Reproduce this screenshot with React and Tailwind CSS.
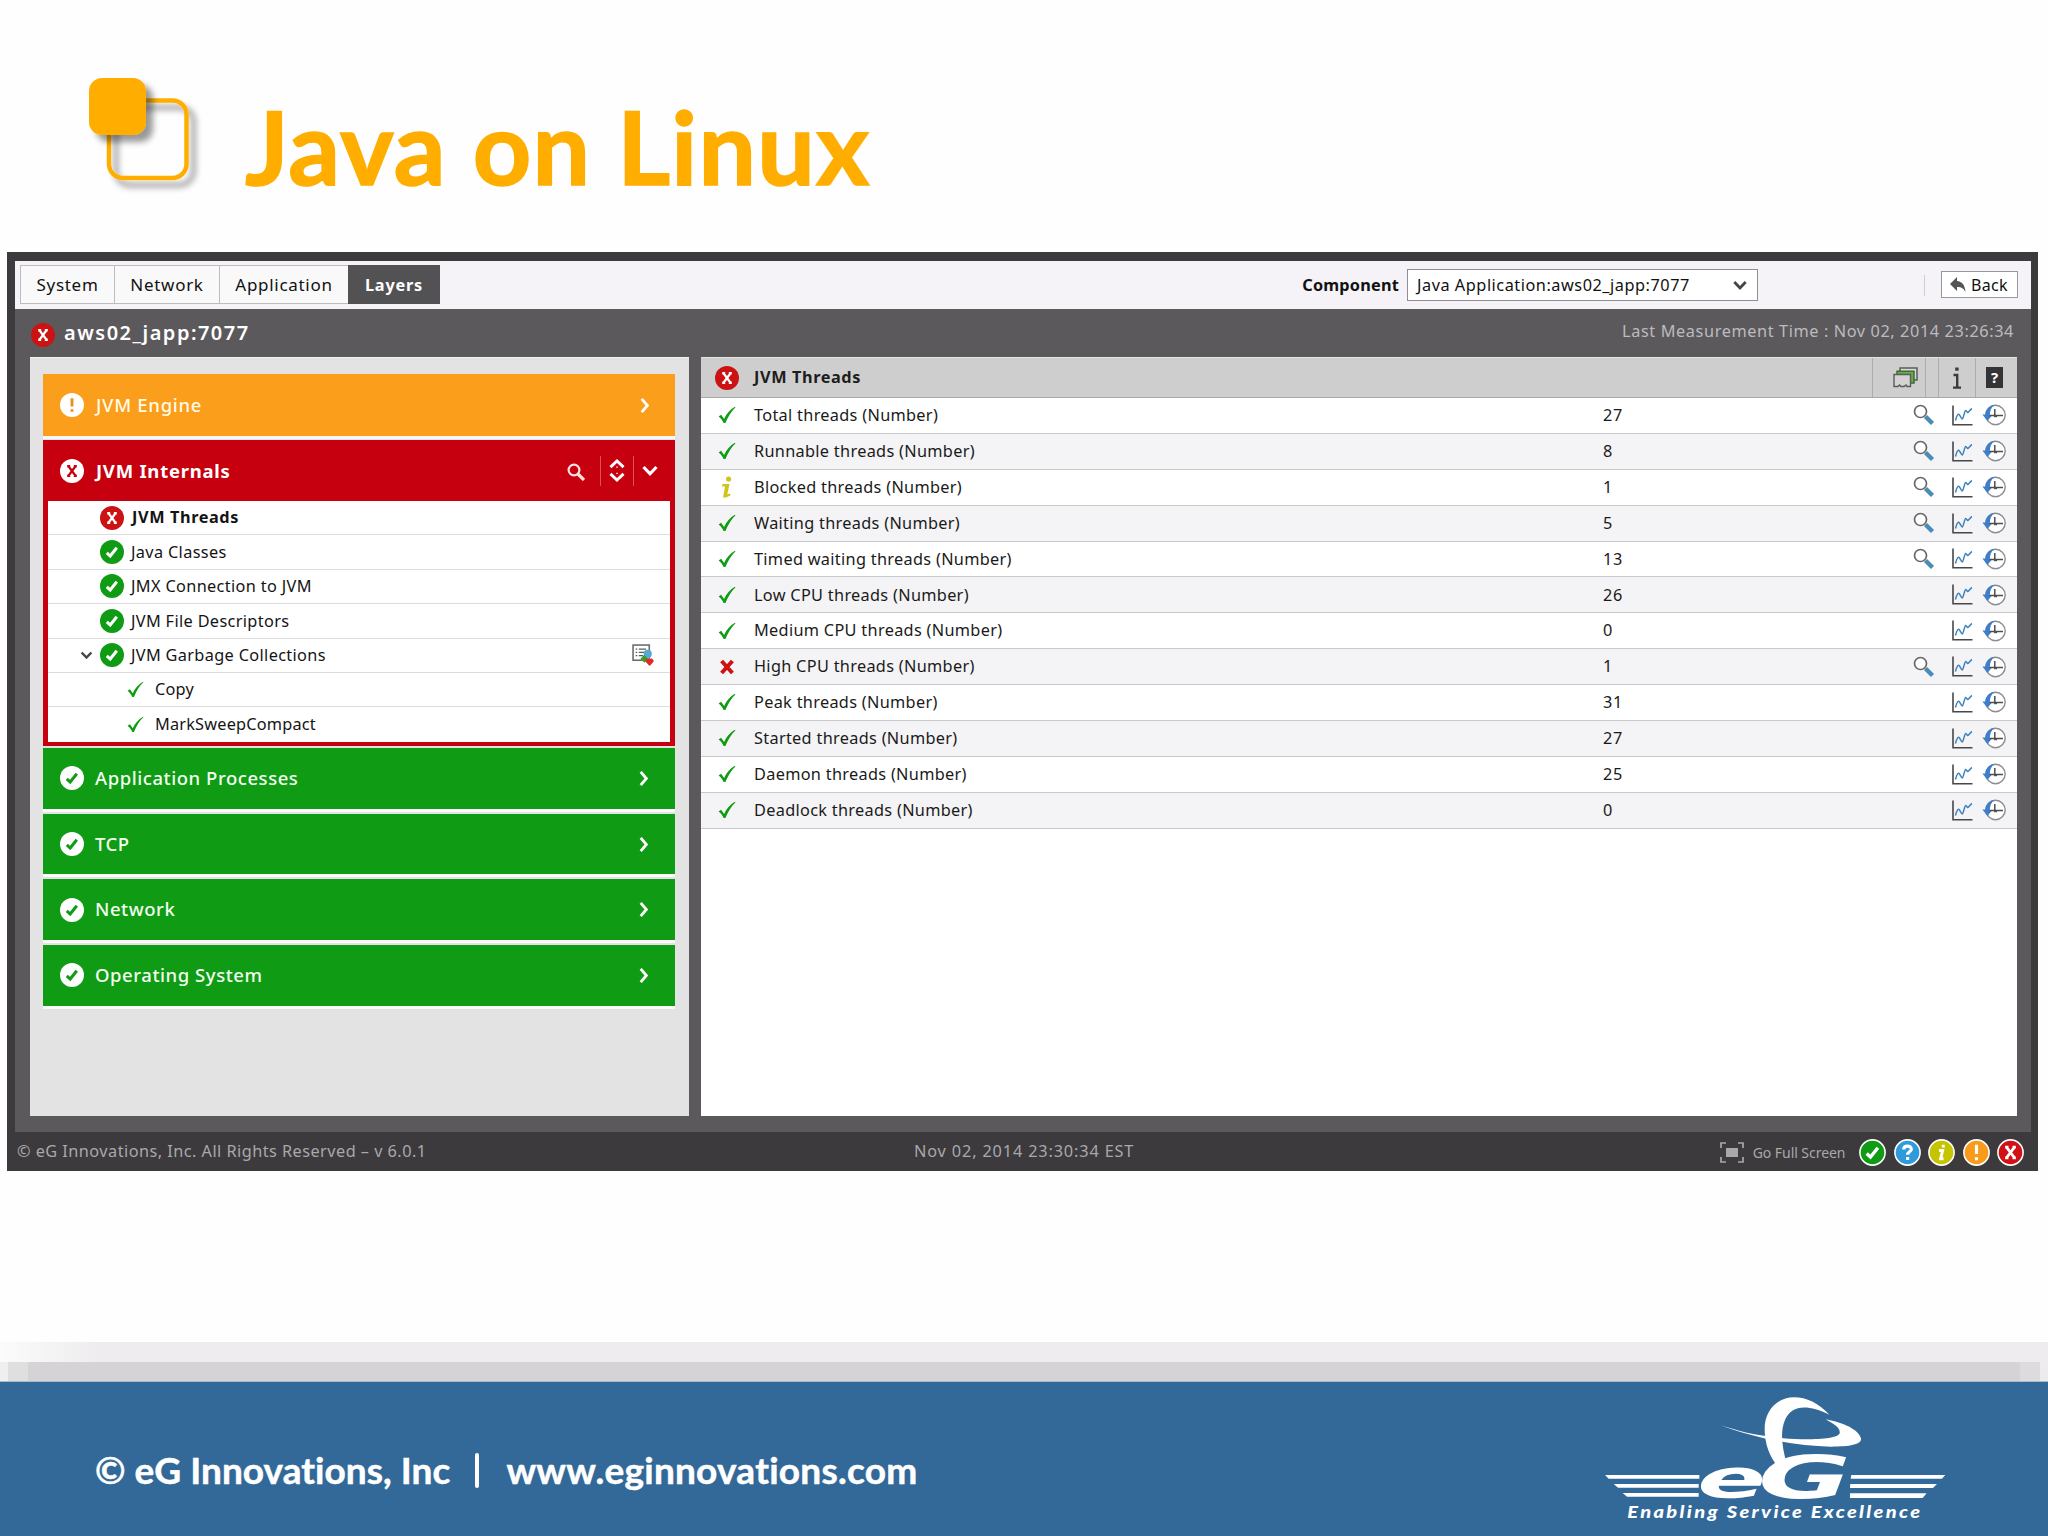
import React, { useState } from "react";

const layers = [
  { name: "Application Processes", margin: "mt-[2px]" },
  { name: "TCP", margin: "mt-[5px]" },
  { name: "Network", margin: "mt-[5px]" },
  { name: "Operating System", margin: "mt-[5px]" },
];

const internals = [
  { name: "JVM Threads", status: "critical" },
  { name: "Java Classes", status: "ok" },
  { name: "JMX Connection to JVM", status: "ok" },
  { name: "JVM File Descriptors", status: "ok" },
  { name: "JVM Garbage Collections", status: "ok", open: true },
  { name: "Copy", child: true },
  { name: "MarkSweepCompact", child: true },
];

const measures = [
  { name: "Total threads (Number)", value: 27, state: "ok", diagnosis: true },
  { name: "Runnable threads (Number)", value: 8, state: "ok", diagnosis: true },
  { name: "Blocked threads (Number)", value: 1, state: "info", diagnosis: true },
  { name: "Waiting threads (Number)", value: 5, state: "ok", diagnosis: true },
  { name: "Timed waiting threads (Number)", value: 13, state: "ok", diagnosis: true },
  { name: "Low CPU threads (Number)", value: 26, state: "ok" },
  { name: "Medium CPU threads (Number)", value: 0, state: "ok" },
  { name: "High CPU threads (Number)", value: 1, state: "critical", diagnosis: true },
  { name: "Peak threads (Number)", value: 31, state: "ok" },
  { name: "Started threads (Number)", value: 27, state: "ok" },
  { name: "Daemon threads (Number)", value: 25, state: "ok" },
  { name: "Deadlock threads (Number)", value: 0, state: "ok" },
];

const glyphs = {
  ok: <path d="M6.8 12.8l3.4 3.2 6.6-8.2" fill="none" strokeWidth="3" />,
  critical: (
    <path
      d="M8.6 7.4l6.8 9.2M15.4 7.4l-6.8 9.2M7.2 7.2h3M13.8 7.2h3M7.2 16.8h3M13.8 16.8h3"
      fill="none"
      strokeWidth="2.4"
    />
  ),
  major: <path d="M12 5.2v8.2M12 16.2v2.6" fill="none" strokeWidth="2.8" />,
  unknown: (
    <path
      d="M8.6 9.4c0-4 6.8-4 6.8-.4 0 2.4-3.3 2.4-3.3 5M12.1 16v2.6"
      fill="none"
      strokeWidth="2.8"
    />
  ),
  info: (
    <path
      d="M13.6 5v2.6M9.8 10.2h3.2l-1.8 7.4h2.6"
      fill="none"
      strokeWidth="2.6"
    />
  ),
};

function StatusDot({ status, fill, ink = "#fff", ring, className }) {
  return (
    <svg viewBox="0 0 24 24" className={className}>
      <circle
        cx="12"
        cy="12"
        r={ring ? 11.2 : 12}
        fill={fill}
        stroke={ring ? "#fff" : "none"}
        strokeWidth="1.4"
      />
      <g stroke={ink}>{glyphs[status]}</g>
    </svg>
  );
}

function Tick({ className }) {
  return (
    <svg viewBox="0 0 18 18" className={className}>
      <path d="M0.6 10.4l2.5-1.6 3 4.2C8.4 8 12 3.4 17 .8l.4.6C13.4 5 10 10.4 7.4 17H5.6C4.4 14.2 2.6 12 .6 10.4z" fill="#0e9c12" />
    </svg>
  );
}

function MeasureState({ state }) {
  if (state === "info") {
    return (
      <svg viewBox="0 0 18 22" className="w-[18px] h-[22px]">
        <circle cx="10.6" cy="3" r="2.6" fill="#cfc41c" />
        <path d="M4.5 8h7L9.3 18.2l3-.8v2.2L8 21.5H5L7 10.5H4z" fill="#cfc41c" />
      </svg>
    );
  }
  if (state === "critical") {
    return (
      <svg viewBox="0 0 18 18" className="w-[18px] h-[18px]">
        <path d="M3.6 3l10.8 12M14.4 3L3.6 15" stroke="#cb1313" strokeWidth="4" fill="none" />
      </svg>
    );
  }
  return <Tick className="w-[18px] h-[18px]" />;
}

function Chevron({ className, color = "#fff" }) {
  return (
    <svg viewBox="0 0 12 18" className={className}>
      <path d="M2.5 2l6 7-6 7" stroke={color} strokeWidth="3" fill="none" />
    </svg>
  );
}

function ChevronDown({ className, color = "#fff" }) {
  return (
    <svg viewBox="0 0 16 12" className={className}>
      <path d="M1.5 2L8 8.800 14.5 2" stroke={color} strokeWidth="3.200" fill="none" />
    </svg>
  );
}

function DiagnosisIcon() {
  return (
    <svg viewBox="0 0 22 22" className="w-[22px] h-[22px]">
      <path d="M12.5 12.5l7 7" stroke="#4c8bb8" strokeWidth="4.4" />
      <circle cx="7.5" cy="7.5" r="6" fill="#fff" stroke="#6b6769" strokeWidth="1.7" />
    </svg>
  );
}

function GraphIcon() {
  return (
    <svg viewBox="0 0 21 21" className="w-[21px] h-[21px]">
      <path d="M1 .5v19.3h19.5" stroke="#48474a" strokeWidth="1.6" fill="none" />
      <path d="M3.5 15.5c1-4 2-6.5 3.200-6.200s2.500 4.700 3.600 4.700 2.200-8.500 3.400-8.500 1.200 2.300 2.200 2 2.400-3 4-4" stroke="#3d82bb" strokeWidth="1.5" fill="none" />
    </svg>
  );
}

function HistoryIcon() {
  return (
    <svg viewBox="0 0 24 24" className="w-[24px] h-[24px]">
      <circle cx="13.5" cy="12" r="9.7" fill="#fff" stroke="#8d8c90" strokeWidth="1.4" />
      <path d="M12.5 1.8C8 2.5 3.5 6 3.3 11.5H.4l5 6.5 5-6H7.8c0-3.500 1.200-7.500 4.700-10.200z" fill="#3f7fca" />
      <path d="M12.8 6v8.2M7.5 12.5H21M12.8 12.5l2 1.5" stroke="#4e4d50" strokeWidth="1.5" fill="none" />
    </svg>
  );
}

function ConfigIcon() {
  return (
    <svg viewBox="0 0 21 21" className="w-[22px] h-[22px]">
      <rect x="1" y="1" width="15.5" height="14.5" fill="#fff" stroke="#6b6a6d" strokeWidth="1.5" />
      <path d="M3.5 5h1.5M6.5 5h7M3.5 8h1.5M6.5 8h5M3.5 11h1.5M6.5 11h4" stroke="#5c5b5e" strokeWidth="1.2" />
      <circle cx="15" cy="9.5" r="3.900" fill="#57a9cf" />
      <path d="M8 14l3.500-3.500 4 3.500-3.500 4z" fill="#3f9a2c" />
      <path d="M13 15.500l2-2 1.800 1 1.800-1 2 2v1.500l-3.800 4-3.800-4z" fill="#e02a2a" />
    </svg>
  );
}

function LayerBar({ name, margin }) {
  return (
    <div className={`${margin} flex h-[60.7px] shrink-0 items-center bg-[#0f9b13] pl-[17px] pr-[25px] shadow-[0_3px_0_#fafafa]`}>
      <StatusDot status="ok" fill="#fff" ink="#0f9b13" className="h-[24px] w-[24px]" />
      <span className="ml-[11px] pb-px text-[18.5px] font-medium tracking-[0.55px] text-[#f2fff0]">{name}</span>
      <Chevron className="ml-auto h-[17px] w-[12px]" />
    </div>
  );
}

function InternalRow({ row }) {
  const isBold = row.status === "critical";
  return (
    <div className="flex h-[34.4px] items-center border-b border-[#dcdcde] pr-[16px] text-[16.3px] tracking-[0.35px] text-[#141414] last:border-b-0">
      {row.child ? (
        <Tick className="ml-[79px] h-[17px] w-[17px]" />
      ) : (
        <>
          <span className="flex w-[52px] justify-end pr-[7px]">
            {row.open && <ChevronDown color="#454447" className="h-[9px] w-[13px]" />}
          </span>
          <StatusDot status={row.status} fill={isBold ? "#cb1313" : "#0f9b13"} className="h-[24px] w-[24px]" />
        </>
      )}
      <span className={isBold ? "ml-[8px] font-bold tracking-[0.6px]" : row.child ? "ml-[11px] tracking-[0.2px]" : "ml-[7px]"}>
        {row.name}
      </span>
      {row.open && (
        <span className="ml-auto">
          <ConfigIcon />
        </span>
      )}
    </div>
  );
}

function LayerPanel() {
  return (
    <div className="h-[759px] w-[659px] border-t border-[#f2f2f2] bg-[#e3e3e3] pt-[16px] pl-[13px] pr-[14px]">
      <div className="flex h-[62px] items-center bg-[#fa9e1b] pl-[17px] pr-[24px] shadow-[0_3px_0_#f7f7f7]">
        <StatusDot status="major" fill="#fff" ink="#e89016" className="h-[24px] w-[24px]" />
        <span className="ml-[12px] pb-px text-[18.5px] font-medium tracking-[0.7px] text-[#fffbe9]">JVM Engine</span>
        <Chevron className="ml-auto h-[17px] w-[12px]" />
      </div>
      <div className="mt-[4px] h-[306px] bg-[#c6000e] px-[5px] pb-[4px]">
        <div className="flex h-[61px] items-center pl-[12px] pr-[12px]">
          <StatusDot status="critical" fill="#fff" ink="#c6000e" className="h-[24px] w-[24px]" />
          <span className="ml-[12px] text-[18.5px] font-bold tracking-[0.75px] text-white">JVM Internals</span>
          <svg viewBox="0 0 18 18" className="mt-[3px] ml-auto h-[18px] w-[18px]">
            <circle cx="7" cy="7" r="5.4" stroke="#ffdfe0" strokeWidth="2.2" fill="none" />
            <path d="M11 11l6 6" stroke="#ffdfe0" strokeWidth="3.2" />
          </svg>
          <span className="ml-[15px] h-[30px] w-px bg-[#dd5058]" />
          <svg viewBox="0 0 16 26" className="ml-[8px] h-[25px] w-[16px]">
            <path d="M1.2 9.5L8 3l6.8 6.5M1.2 16.5L8 23l6.8-6.5" stroke="#fff" strokeWidth="3" fill="none" />
            <path d="M7 9.5h2M7 16h2" stroke="#ffb5b5" strokeWidth="1.5" />
          </svg>
          <span className="ml-[8px] h-[30px] w-px bg-[#dd5058]" />
          <ChevronDown className="ml-[8px] h-[12px] w-[16px]" />
        </div>
        <div className="h-[241px] bg-white">
          {internals.map((row) => (
            <InternalRow row={row} key={row.name} />
          ))}
        </div>
      </div>
      {layers.map((layer) => (
        <LayerBar key={layer.name} {...layer} />
      ))}
    </div>
  );
}

function MeasurePanel() {
  return (
    <div className="h-[759px] w-[1316px] bg-white">
      <div className="flex h-[41px] items-center border-t border-b border-t-[#e4e4e4] border-b-[#a9a9a9] bg-[#cfcecf] pl-[14px]">
        <StatusDot status="critical" fill="#cb1313" className="h-[24px] w-[24px]" />
        <span className="ml-[15px] text-[16.3px] font-bold tracking-[0.6px] text-[#1d1d1d]">JVM Threads</span>
        <div className="ml-auto flex h-full">
          <div className="flex w-[53px] items-center justify-end border-l border-[#acacac] pr-[7px]">
            <svg viewBox="0 0 25 21" className="h-[21px] w-[25px]">
              <path d="M7 5V1h17v12h-3" fill="#d9d9d9" stroke="#5b5b5b" strokeWidth="1.5" />
              <path d="M4 8V4.3h17V16h-4" fill="#67ad4e" stroke="#3d6f30" strokeWidth="1.5" />
              <path d="M1 7.5h16.5v12H14l-1-1.5-2 1.5H8L6.5 18 5 19.5H1z" fill="#d3d3d3" stroke="#5b5b5b" strokeWidth="1.4" />
            </svg>
          </div>
          <div className="w-[13px] border-l border-[#acacac]" />
          <div className="flex w-[37px] items-center justify-center border-l border-[#acacac]">
            <svg viewBox="0 0 10 22" className="h-[22px] w-[10px]">
              <rect x="3.2" y="0.5" width="3.4" height="3.2" fill="#3b3b3b" />
              <path d="M1.5 8h3.700v12.500M1 20.600h8" stroke="#3b3b3b" strokeWidth="2.4" fill="none" />
            </svg>
          </div>
          <div className="flex w-[42px] items-center border-l border-[#acacac] pl-[10px]">
            <span className="flex h-[21px] w-[17px] items-center justify-center bg-[#343335] text-[15px] font-bold text-white">
              ?
            </span>
          </div>
        </div>
      </div>
      {measures.map((m, index) => (
        <div
          key={m.name}
          className={`flex h-[35.88px] items-center border-b border-[#c9c9cb] pl-[17px] text-[16.3px] tracking-[0.31px] text-[#1a1a1a] ${
            index % 2 ? "bg-[#f4f3f5]" : "bg-white"
          }`}
        >
          <span className="flex w-[18px] justify-center">
            <MeasureState state={m.state} />
          </span>
          <span className="ml-[18px] w-[849px]">{m.name}</span>
          <span className="tracking-[0.7px]">{m.value}</span>
          <div className="ml-auto flex items-center pr-[11px]">
            {m.diagnosis && <DiagnosisIcon />}
            <span className="ml-[17px]">
              <GraphIcon />
            </span>
            <span className="ml-[9px]">
              <HistoryIcon />
            </span>
          </div>
        </div>
      ))}
    </div>
  );
}

function TopBar() {
  const [tab, setTab] = useState("Layers");
  const tabs = [
    { name: "System", width: "w-[94px]" },
    { name: "Network", width: "w-[105px]" },
    { name: "Application", width: "w-[129px]" },
    { name: "Layers", width: "w-[92px]" },
  ];

  return (
    <div className="flex h-[48px] items-center bg-[#f5f3f7] pl-[5px] pr-[13px] text-[16.3px] text-[#111]">
      {tabs.map((t) => (
        <button
          key={t.name}
          onClick={() => setTab(t.name)}
          className={`${t.width} mb-px h-[39px] pt-px ${
            tab === t.name
              ? "bg-[#525153] font-bold tracking-[0.8px] text-white"
              : "border-y border-l border-[#bdbdbf] bg-[#f9f9f9] text-[17px] tracking-[0.7px]"
          }`}
        >
          {t.name}
        </button>
      ))}
      <span className="ml-auto font-bold tracking-[0.2px]">Component</span>
      <div className="mb-px ml-[8px] flex h-[32px] w-[351px] items-center border border-[#8f8e92] bg-white pr-[10px] pl-[9px]">
        <span className="pt-px tracking-[0.53px]">Java Application:aws02_japp:7077</span>
        <ChevronDown color="#454447" className="mt-[2px] ml-auto h-[11px] w-[14px]" />
      </div>
      <span className="mr-[16px] ml-[166px] h-[21px] w-px bg-[#cfced2]" />
      <button className="mb-px flex h-[27px] w-[77px] items-center border border-[#98979b] bg-white pl-[8px]">
        <svg viewBox="0 0 16 16" className="h-[16px] w-[16px]">
          <path d="M0 7l7-7v4c5 .5 8 4 8.500 11C14 12 12 10 7 10v4z" fill="#555457" />
        </svg>
        <span className="ml-[5px] text-[16px] tracking-[0.3px]">Back</span>
      </button>
    </div>
  );
}

function Footer() {
  return (
    <div className="flex h-[39px] items-center bg-[#3c3a3d] pr-[14px] pl-[10px] text-[#a9a8ab]">
      <span className="w-[897px] text-[16.3px] tracking-[0.46px]">
        © eG Innovations, Inc. All Rights Reserved – v 6.0.1
      </span>
      <span className="text-[16.3px] tracking-[0.85px]">Nov 02, 2014 23:30:34 EST</span>
      <svg viewBox="0 0 24 21" className="mt-px ml-auto h-[21px] w-[24px]">
        <path d="M1 6V1h5M18 1h5v5M23 15v5h-5M6 20H1v-5" stroke="#a9a8ab" strokeWidth="1.7" fill="none" />
        <rect x="6" y="6" width="12" height="9" fill="#a9a8ab" />
      </svg>
      <span className="mt-px ml-[9px] text-[14px] tracking-[-0.05px]">Go Full Screen</span>
      <div className="mt-[2px] ml-[14px] flex gap-[7.4px]">
        <StatusDot ring status="ok" fill="#0f9b13" className="h-[27px] w-[27px]" />
        <StatusDot ring status="unknown" fill="#2f9bdc" className="h-[27px] w-[27px]" />
        <StatusDot ring status="info" fill="#c6c300" className="h-[27px] w-[27px]" />
        <StatusDot ring status="major" fill="#fa9a1b" className="h-[27px] w-[27px]" />
        <StatusDot ring status="critical" fill="#d01115" className="h-[27px] w-[27px]" />
      </div>
    </div>
  );
}

function Monitor() {
  return (
    <div className="ml-[7px] h-[919px] w-[2031px] bg-[#3c3a3d] pt-[9px] font-['Noto_Sans',sans-serif]">
      <div className="ml-[8px] h-[871px] w-[2016px] bg-[#5b595c]">
        <TopBar />
        <div className="flex h-[48px] items-center justify-between pl-[16px] pr-[17px]">
          <div className="flex items-center">
            <StatusDot status="critical" fill="#cb1313" className="mt-[4px] h-[24px] w-[24px]" />
            <span className="ml-[9px] text-[20px] font-semibold tracking-[1.5px] text-white">aws02_japp:7077</span>
          </div>
          <span className="pb-[4px] text-[16.3px] tracking-[0.6px] text-[#bcbbbd]">
            Last Measurement Time : Nov 02, 2014 23:26:34
          </span>
        </div>
        <div className="flex gap-[12px] pl-[15px]">
          <LayerPanel />
          <MeasurePanel />
        </div>
      </div>
      <Footer />
    </div>
  );
}

function SlideTitle() {
  return (
    <div className="flex h-[252px] items-start">
      <svg viewBox="0 0 124 124" className="mt-[70px] ml-[80px] h-[124px] w-[124px]">
        <defs>
          <filter id="soft" x="-20%" y="-20%" width="150%" height="150%">
            <feDropShadow dx="7" dy="7" stdDeviation="3" floodColor="#000" floodOpacity="0.4" />
          </filter>
        </defs>
        <rect x="29" y="30.500" width="77.500" height="77.500" rx="14" fill="none" stroke="#ffae00" strokeWidth="4.5" filter="url(#soft)" />
        <rect x="9" y="8" width="57" height="57" rx="13" fill="#ffae00" filter="url(#soft)" />
      </svg>
      <h1 className="mt-[85px] ml-[41px] text-[102px] leading-[122px] font-bold tracking-[1.2px] text-[#ffae00] [-webkit-text-stroke:1.5px_#ffae00] font-['Lato',sans-serif]">
        Java on Linux
      </h1>
    </div>
  );
}

function Logo() {
  return (
    <svg viewBox="120 60 1060 400" className="mt-[9px] ml-auto mr-[95px] h-[133.3px] w-[353.3px]" fill="#fff">
      <path d="M135 312h283v11H146zM161 339h255v11H174zM188 366h228v11H201z" />
      <path d="M874 312h282l-10 11H872zM871 339h260l-12 12H870zM870 367h230l-12 14H870z" />
      <path d="M808 131C775 96 740 79 702 79c-50 0-88 40-88 95 0 45 15 84 42 116l24-14c-14-45-20-95-5-129 20-46 68-48 133-16z" />
      <path d="M483 163c60 20 130 38 240 42 60 1 112-4 116-18 4-16-20-30-42-42 55 10 100 32 106 57 3 18-30 25-90 25-110-1-240-29-330-64z" />
      <g fontFamily="'DejaVu Sans', sans-serif" fontWeight="700" fontStyle="italic">
        <text x="0" y="0" fontSize="160" transform="translate(412 379) scale(1.9 1)">e</text>
        <text x="0" y="0" fontSize="176" transform="translate(594 382) scale(1.93 1)">G</text>
      </g>
      <text x="0" y="0" fontSize="50" textLength="732" transform="translate(202 441) scale(1.2 1)" fontFamily="Lato, sans-serif" fontWeight="900" fontStyle="italic">
        Enabling Service Excellence
      </text>
    </svg>
  );
}

export default function App() {
  return (
    <div className="flex h-[1536px] w-[2048px] flex-col overflow-hidden bg-[#fefefe]">
      <SlideTitle />
      <Monitor />
      <div className="mt-auto h-[20px] bg-linear-to-r from-[#fbfbfb] via-[#eeecee] via-5% to-[#eeecee]" />
      <div className="flex h-[19px] bg-[#d5d3d5]">
        <div className="w-[8px] bg-[#efefef]" />
        <div className="w-[20px] bg-[#e0dfe0]" />
        <div className="ml-auto w-[20px] bg-[#dddbdd]" />
        <div className="w-[8px] bg-[#ececec]" />
      </div>
      <div className="flex h-[155px] border-t border-[#a3bfca] bg-[#336999] text-white">
        <div className="mt-[64px] ml-[95px] flex h-[48px] items-center text-[37px] font-bold [-webkit-text-stroke:0.5px_#fff] font-['Lato',sans-serif]">
          <span className="tracking-[0.05px]">© eG Innovations, Inc</span>
          <span className="ml-[25px] h-[35px] w-[4px] rounded-sm bg-white" />
          <span className="ml-[27px] tracking-[0.25px]">www.eginnovations.com</span>
        </div>
        <Logo />
      </div>
    </div>
  );
}
